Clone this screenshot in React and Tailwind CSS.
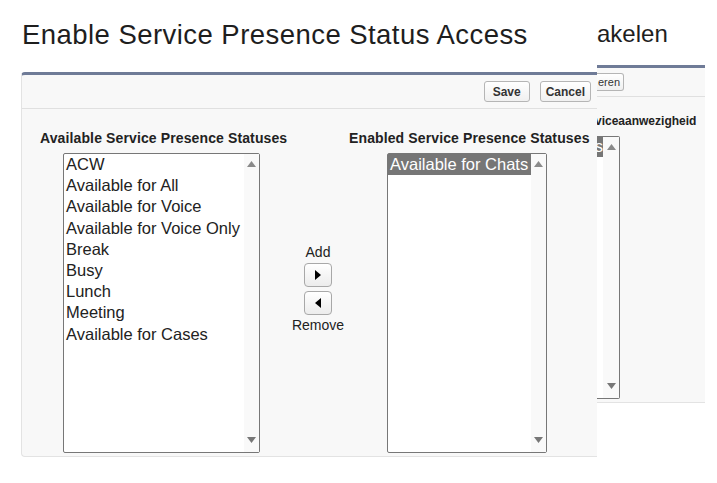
import React from "react";

const left = [
  "ACW",
  "Available for All",
  "Available for Voice",
  "Available for Voice Only",
  "Break",
  "Busy",
  "Lunch",
  "Meeting",
  "Available for Cases",
];

function Up({ className = "fill-[#8a8a8a]" }) {
  return (
    <svg width="9" height="6" viewBox="0 0 9 6" className={className}>
      <path d="M4.5 0 L9 6 L0 6 Z" />
    </svg>
  );
}

function Down({ className = "fill-[#777]" }) {
  return (
    <svg width="9" height="6" viewBox="0 0 9 6" className={className}>
      <path d="M0 0 L9 0 L4.5 6 Z" />
    </svg>
  );
}

function ScrollTrack({ width = "w-[15px]" }) {
  return (
    <div className={`${width} h-full bg-[#f9f9f9] flex flex-col items-center justify-between pt-[7px] pb-[9px]`}>
      <Up />
      <Down />
    </div>
  );
}

function ListBox({ items, selected, className }) {
  return (
    <div className={`h-[300px] border border-[#777] rounded-[2px] bg-white flex ${className}`}>
      <div className="flex-1 overflow-hidden text-[16.5px] leading-[21.2px] text-[#222]">
        {items.map((t) => (
          <div
            key={t}
            className={`pl-[2px] whitespace-nowrap ${t === selected ? "bg-[#767676] text-white" : ""}`}
          >
            {t}
          </div>
        ))}
      </div>
      <ScrollTrack />
    </div>
  );
}

function ArrowButton({ dir }) {
  return (
    <div className="w-[28px] h-[24px] rounded-[4px] border border-[#a8a8a8] bg-gradient-to-b from-white to-[#ececec] flex items-center justify-center">
      <svg width="6" height="10" viewBox="0 0 6 10" className="fill-black">
        {dir === "right" ? <path d="M0 0 L6 5 L0 10 Z" /> : <path d="M6 0 L0 5 L6 10 Z" />}
      </svg>
    </div>
  );
}

function Btn({ children, className = "" }) {
  return (
    <button className={`h-[21px] rounded-[3px] border border-[#b5b5b5] bg-gradient-to-b from-white to-[#f0f0f0] text-[12px] font-bold text-[#333] leading-none ${className}`}>
      {children}
    </button>
  );
}

export default function App() {
  return (
    <div className="w-[717px] h-[483px] bg-white overflow-hidden font-['Liberation_Sans',Arial,sans-serif] text-[#222]">
      <div className="flex h-[65px]">
        <div className="w-[597px] pl-[22px] pt-[21px]">
          <h1 className="text-[27.5px] leading-[27px] tracking-[0.45px] whitespace-nowrap text-[#1e1e1e]">
            Enable Service Presence Status Access
          </h1>
        </div>
        <div className="w-[108px] pt-[22px] overflow-hidden">
          <span className="text-[24px] leading-[24px] whitespace-nowrap text-[#1e1e1e]">akelen</span>
        </div>
      </div>

      <div className="flex items-start">
        {/* main panel */}
        <div className="ml-[21px] mt-[7px] w-[576px] bg-[#f8f8f8] border-t-[3px] border-t-[#6f7b97] border-l border-b border-l-[#e3e3e3] border-b-[#e3e3e3] rounded-tl-[4px] rounded-bl-[4px] pb-[3px]">
          <div className="h-[34px] border-b border-[#e0e0e0] flex justify-end items-start pt-[6px] pr-[6px] gap-[10px]">
            <Btn className="w-[46px]">Save</Btn>
            <Btn className="px-[5px]">Cancel</Btn>
          </div>

          <div className="flex items-start pl-[18px] pt-[21px]">
            <div className="w-[247px]">
              <div className="text-[14px] font-bold leading-[16px] tracking-[0.12px] whitespace-nowrap text-center mb-[7px]">
                Available Service Presence Statuses
              </div>
              <ListBox items={left} className="ml-[23px] w-[197px]" />
            </div>

            <div className="w-[62px] mt-[114px] flex flex-col items-center text-[14px] leading-[16px] text-[#222]">
              <span>Add</span>
              <div className="mt-[3px] mb-[2px] flex flex-col gap-[4px]">
                <ArrowButton dir="right" />
                <ArrowButton dir="left" />
              </div>
              <span>Remove</span>
            </div>

            <div className="w-[239px]">
              <div className="text-[14px] font-bold leading-[16px] tracking-[0.12px] whitespace-nowrap text-center mb-[7px]">
                Enabled Service Presence Statuses
              </div>
              <ListBox
                items={["Available for Chats"]}
                selected="Available for Chats"
                className="ml-[38px] w-[160px]"
              />
            </div>
          </div>
        </div>

        {/* background panel (other window) */}
        <div className="w-[108px] bg-[#f8f8f8] border-t-[3px] border-t-[#6f7b97] border-b border-b-[#e3e3e3] pb-[3px]">
          <div className="h-[29px] border-b border-[#e0e0e0] pt-[5px] flex items-start">
            <div className="flex h-[18px] items-center pl-[1px] pr-[3px] border border-l-0 border-[#b5b5b5] rounded-r-[3px] bg-gradient-to-b from-white to-[#f0f0f0] text-[11px] text-[#333]">
              eren
            </div>
          </div>
          <div className="pt-[18px] overflow-hidden">
            <div className="-ml-[2px] text-[12px] leading-[13px] font-bold whitespace-nowrap">
              viceaanwezigheid
            </div>
          </div>
          <div className="mt-[8px] w-[23px] h-[263px] border-y border-r border-[#777] rounded-r-[2px] bg-white flex">
            <div className="w-[6px] overflow-hidden">
              <div className="h-[20px] bg-[#767676] text-white text-[16px] leading-[20px] flex justify-end">
                s
              </div>
            </div>
            <ScrollTrack width="w-[16px]" />
          </div>
        </div>
      </div>
    </div>
  );
}
